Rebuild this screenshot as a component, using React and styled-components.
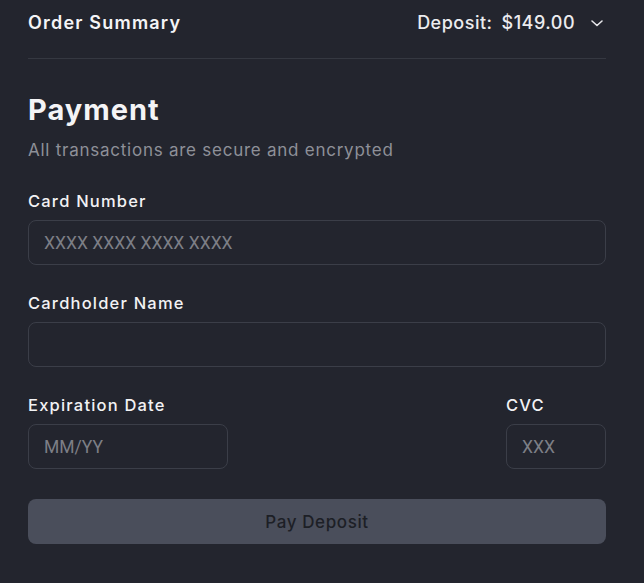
import React from "react";
import styled, { createGlobalStyle } from "styled-components";

const Global = createGlobalStyle`
  html, body { margin: 0; padding: 0; background: #23252e; }
  body { font-family: Inter, "Noto Sans", sans-serif; color: #f4f4f6; }
  * { box-sizing: border-box; }
`;

const Page = styled.div`
  width: 644px;
  min-height: 583px;
  background: #23252e;
  padding: 0 38px 0 28px;
`;

const Header = styled.div`
  height: 59px;
  display: flex;
  align-items: flex-start;
  justify-content: space-between;
  padding-top: 10px;
  border-bottom: 1px solid #353841;
`;

const HeaderTitle = styled.div`
  font-size: 18px;
  font-weight: 600;
  line-height: 26px;
  letter-spacing: 1.2px;
`;

const DepositToggle = styled.div`
  display: flex;
  align-items: center;
  font-size: 18px;
  font-weight: 500;
  line-height: 26px;
  letter-spacing: 0.5px;
  gap: 9px;
  color: #ececef;
`;

const Chevron = styled.svg`
  width: 14px;
  height: 14px;
  margin-left: 6px;
  margin-right: 2px;
`;

const Title = styled.h1`
  margin: 32px 0 0;
  font-size: 29px;
  font-weight: 700;
  line-height: 38px;
  letter-spacing: 1px;
`;

const Subtitle = styled.p`
  margin: 8px 0 0;
  font-size: 17px;
  line-height: 26px;
  letter-spacing: 0.75px;
  color: #8e9098;
`;

const Form = styled.form`
  display: flex;
  flex-direction: column;
  gap: 26px;
  margin-top: 26px;
`;

const Row = styled.div`
  display: flex;
  justify-content: space-between;
`;

const Field = styled.label`
  display: flex;
  flex-direction: column;
  gap: 7px;
  width: ${(p) => p.$w || "100%"};
`;

const Label = styled.span`
  font-size: 16.5px;
  font-weight: 500;
  line-height: 24px;
  letter-spacing: 1.2px;
  color: #f2f2f4;
`;

const Input = styled.input`
  height: 45px;
  width: 100%;
  border: 1px solid #3b3e48;
  border-radius: 8px;
  background: transparent;
  padding: 0 15px;
  font-family: Roboto, sans-serif;
  font-size: 17.5px;
  color: #e8e8ea;
  outline: none;
  &::placeholder { color: #7d7f86; }
`;

const Button = styled.button`
  margin-top: 4px;
  height: 45px;
  width: 100%;
  border: none;
  border-radius: 8px;
  background: #4a4e5b;
  color: #1d1f26;
  font-family: inherit;
  font-size: 17px;
  font-weight: 500;
  letter-spacing: 0.6px;
`;

export default function App() {
  return (
    <Page>
      <Global />
      <Header>
        <HeaderTitle>Order Summary</HeaderTitle>
        <DepositToggle>
          <span>Deposit:</span>
          <span>$149.00</span>
          <Chevron viewBox="0 0 14 14" fill="none" stroke="#e6e6e9" strokeWidth="1.6" strokeLinecap="round" strokeLinejoin="round">
            <path d="M2 5 L7 9.5 L12 5" />
          </Chevron>
        </DepositToggle>
      </Header>
      <Title>Payment</Title>
      <Subtitle>All transactions are secure and encrypted</Subtitle>
      <Form onSubmit={(e) => e.preventDefault()}>
        <Field>
          <Label>Card Number</Label>
          <Input placeholder="XXXX XXXX XXXX XXXX" />
        </Field>
        <Field>
          <Label>Cardholder Name</Label>
          <Input />
        </Field>
        <Row>
          <Field $w="200px">
            <Label>Expiration Date</Label>
            <Input placeholder="MM/YY" />
          </Field>
          <Field $w="100px">
            <Label>CVC</Label>
            <Input placeholder="XXX" />
          </Field>
        </Row>
        <Button type="submit">Pay Deposit</Button>
      </Form>
    </Page>
  );
}
